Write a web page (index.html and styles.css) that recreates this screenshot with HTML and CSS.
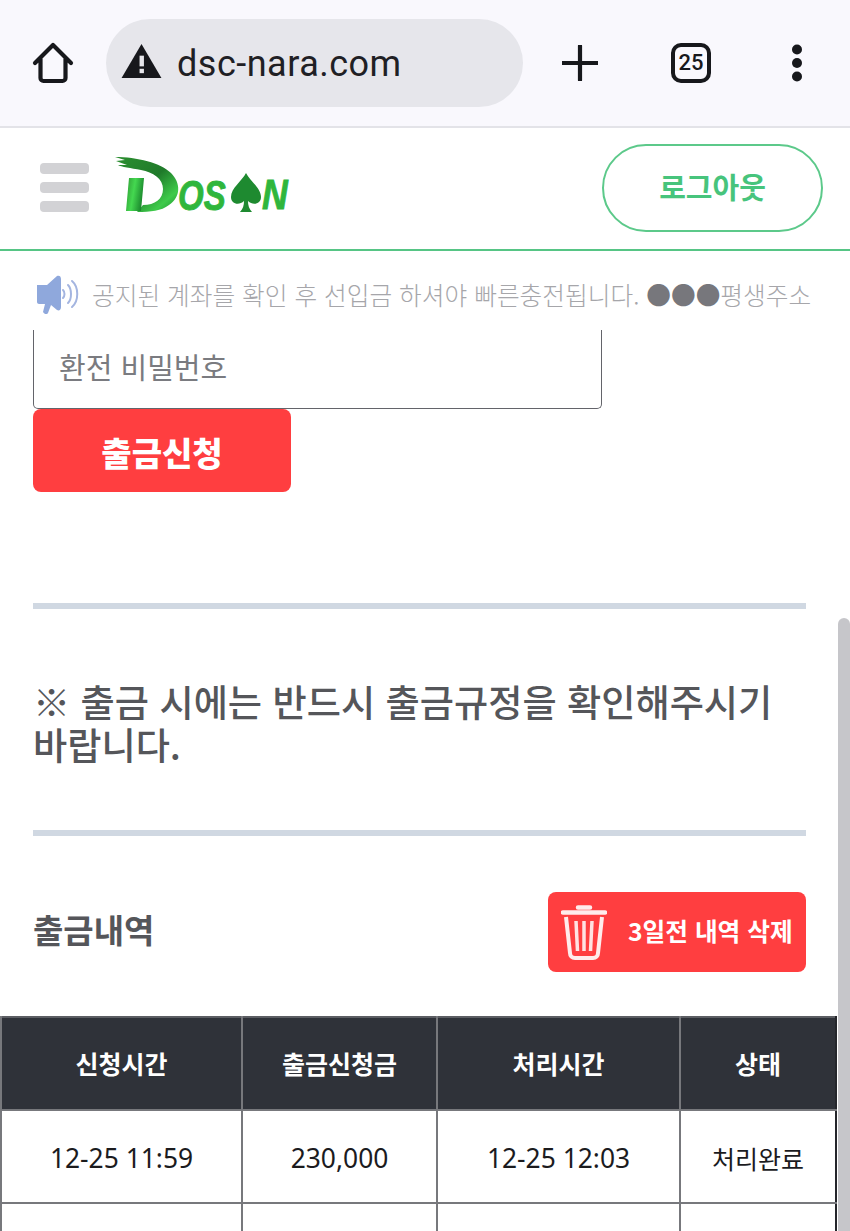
FILE: index.html
```html
<!DOCTYPE html>
<html lang="ko">
<head>
<meta charset="utf-8">
<title>dsc-nara.com</title>
<link rel="stylesheet" href="styles.css">
</head>
<body>
<div class="screen">
  <div class="chrome">
    <svg class="home-icon" viewBox="0 0 42 42" width="42" height="42"><path d="M3 21 21 3l18 18M8.500 17v19a3 3 0 0 0 3 3h19a3 3 0 0 0 3-3V17" fill="none" stroke="#17181c" stroke-width="4.200" stroke-linecap="round" stroke-linejoin="round"/></svg>
    <div class="omnibox">
      <svg class="warn-icon" viewBox="0 0 42 36" width="41" height="35"><path d="M21 0 41.500 35H.5Z" fill="#17181c"/><rect x="19" y="12" width="4.500" height="11" fill="#e6e6eb"/><rect x="19" y="25.500" width="4.500" height="4.500" fill="#e6e6eb"/></svg>
      <span class="url">dsc-nara.com</span>
    </div>
    <svg class="plus-icon" viewBox="0 0 36 36" width="36" height="36"><path d="M18 1v34M1 18h34" stroke="#17181c" stroke-width="4.200" stroke-linecap="round"/></svg>
    <div class="tabs">25</div>
    <svg class="dots-icon" viewBox="0 0 12 38" width="12" height="38"><circle cx="6" cy="5.500" r="5"/><circle cx="6" cy="19" r="5"/><circle cx="6" cy="32.500" r="5"/></svg>
  </div>

  <header class="site-header">
    <div class="burger"><span></span><span></span><span></span></div>
    <svg class="logo" viewBox="0 0 180 70" width="180" height="70" role="img" aria-label="Dosan">
      <defs>
        <linearGradient id="lg" x1="0" y1="0" x2="1" y2="0.300">
          <stop offset="0" stop-color="#2f9a34"/><stop offset=".5" stop-color="#44d850"/><stop offset="1" stop-color="#1c8a2e"/>
        </linearGradient>
        <linearGradient id="dg" x1="0" y1="0" x2="1" y2="1">
          <stop offset="0" stop-color="#2c8f30"/><stop offset=".5" stop-color="#1f7a2a"/><stop offset=".8" stop-color="#3ecb4a"/><stop offset="1" stop-color="#1c8a2e"/>
        </linearGradient>
      </defs>
      <path d="M2 4C24 4 48 10 58 20c10 10 10 24-2 32-8 6-18 7-32 7l6-7c12 0 20-6 20-16 0-10-10-17-22-19C18 15 8 14 5 12h9L3 8l9-1Z" fill="url(#dg)"/>
      <path d="M16 25h15l-3 33H13Z" fill="url(#lg)"/>
      <text class="logo-text" transform="translate(65 57) scale(1 1.3)" fill="#2fb63c" stroke="#2fb63c" stroke-width=".7">OS</text>
      <path d="M133 20c4 8 15 15 15 24 0 7-8 9-13 4 0 4 1 8 4 11h-12c3-3 4-7 4-11-5 5-13 3-13-4 0-9 11-16 15-24Z" fill="#1e8a30"/>
      <text class="logo-text" transform="translate(149 56) scale(1.08 1.3)" fill="#2fb63c" stroke="#2fb63c" stroke-width=".7">N</text>
    </svg>
    <a class="logout">로그아웃</a>
  </header>

  <div class="notice">
    <svg class="speaker" viewBox="0 0 44 40" width="44" height="40"><path d="M1 10h10l10-9c2-1 4 0 4 3v28c0 3-2 4-4 3l-6-5-3 8c-1 2-4 1-5-1l2-8H3c-1 0-2-1-2-2Z" fill="#8fa8dc"/><path d="M27 15c2 2 2 6 0 8M32 10c4 4 4 14 0 18M36 6c7 6 7 20 0 26" fill="none" stroke="#a4b5e0" stroke-width="2" stroke-linecap="round"/></svg>
    <span class="notice-text">공지된 계좌를 확인 후 선입금 하셔야 빠른충전됩니다. <span class="notice-dots">●●●</span>평생주소</span>
  </div>

  <main class="content">
    <div class="panel">
      <div class="field">환전 비밀번호</div>
      <button class="btn-apply">출금신청</button>
      <hr class="rule rule-first">
      <p class="warning">※ 출금 시에는 반드시 출금규정을 확인해주시기 바랍니다.</p>
      <hr class="rule rule-second">
      <div class="history-head">
        <h2 class="history-title">출금내역</h2>
        <button class="btn-delete">
          <svg class="trash" viewBox="0 0 46 56" width="46" height="56"><path d="M17 3.500h12M2 8.500h42" stroke="#fff" stroke-width="4.500" stroke-linecap="round" fill="none" opacity=".9"/><path d="M5 13l4 36c0 3 2 5 5 5h18c3 0 5-2 5-5l4-36" stroke="#fff" stroke-width="4" fill="none" opacity=".9"/><path d="M15 17l1.500 30M23 17v30M31 17l-1.500 30" stroke="#fff" stroke-width="3.500" fill="none" opacity=".85"/></svg>
          <span>3일전 내역 삭제</span>
        </button>
      </div>
    </div>
    <table class="history">
      <colgroup><col class="c1"><col class="c2"><col class="c3"><col class="c4"></colgroup>
      <thead><tr><th>신청시간</th><th>출금신청금</th><th>처리시간</th><th>상태</th></tr></thead>
      <tbody>
        <tr><td>12-25 11:59</td><td>230,000</td><td>12-25 12:03</td><td class="status">처리완료</td></tr>
        <tr><td>&nbsp;</td><td></td><td></td><td></td></tr>
      </tbody>
    </table>
    <div class="scroll-thumb"></div>
  </main>
</div>
</body>
</html>
```
FILE: styles.css
```css
* { box-sizing: border-box; }
html, body { margin: 0; padding: 0; background: #fff; }
body { font-family: "Noto Sans", "Noto Sans CJK KR", sans-serif; overflow: hidden; }
.screen { width: 850px; height: 1231px; display: flex; flex-direction: column; overflow: hidden; }

.chrome { height: 128px; flex: none; display: flex; align-items: center; background: #f9f8fd; border-bottom: 2px solid #e3e3e8; padding: 0 0 0 32px; }
.home-icon { flex: none; }
.omnibox { width: 417px; height: 88px; margin-left: 32px; border-radius: 44px; background: #e6e6eb; display: flex; align-items: center; padding-left: 15px; flex: none; }
.warn-icon { flex: none; margin-top: -4px; }
.url { margin-left: 15px; font: 36px/1 Roboto, sans-serif; color: #1f2024; letter-spacing: .5px; margin-top: 2px; }
.plus-icon { margin-left: 39px; flex: none; }
.tabs { margin-left: 73px; width: 40px; height: 40px; flex: none; border: 4px solid #17181c; border-radius: 10px; display: flex; align-items: center; justify-content: center; font: 500 22px/1 Roboto, sans-serif; color: #17181c; }
.dots-icon { margin-left: 80px; flex: none; fill: #17181c; }

.site-header { height: 123px; flex: none; display: flex; align-items: center; background: #fff; border-bottom: 2px solid #56c585; padding: 0 27px 0 40px; }
.burger { width: 49px; display: flex; flex-direction: column; gap: 8px; margin-bottom: 3px; }
.burger span { height: 11px; border-radius: 4px; background: #d2d2d5; }
.logo { margin-left: 24px; margin-bottom: 1px; flex: none; }
.logo-text { font: italic 700 33px "Liberation Sans", sans-serif; }
.logout { margin-left: auto; width: 221px; height: 88px; border: 2px solid #5cc98a; border-radius: 44px; display: flex; align-items: center; justify-content: center; padding-bottom: 4px; font: 700 29px/1 "Noto Sans CJK KR", sans-serif; color: #47c47c; margin-top: -1px; }

.notice { height: 79px; flex: none; display: flex; align-items: center; background: #fff; padding: 8px 0 0 36px; gap: 13px; white-space: nowrap; }
.speaker { flex: none; }
.notice-text { font: 300 24.7px/1 "Noto Sans CJK KR", sans-serif; color: #a6a6aa; margin-left: -1px; }
.notice-dots { color: #77777c; }

.content { position: relative; flex: 1; overflow: hidden; background: #fff; }
.panel { padding: 0 44px 0 33px; }
.field { margin-top: -2px; width: 569px; height: 81px; border: 1px solid #63646a; border-top: none; border-radius: 0 0 5px 5px; padding: 0 25px 4px; display: flex; align-items: center; font: 400 29px/1 "Noto Sans CJK KR", sans-serif; color: #7a7b80; }
.btn-apply { display: block; width: 258px; height: 83px; border: none; border-radius: 8px; background: #ff3e40; color: #fff; font: 900 33px/1 "Noto Sans CJK KR", sans-serif; padding: 3px 0 0; }
.rule { border: none; height: 6px; background: #d0d8e2; margin: 0; }
.rule-first { margin-top: 111px; }
.warning { margin: 71px 0 0; font: 500 37.2px/43px "Noto Sans CJK KR", sans-serif; color: #55565a; word-break: keep-all; padding-right: 20px; }
.rule-second { margin-top: 64px; }
.history-head { margin-top: 56px; height: 80px; display: flex; align-items: center; justify-content: space-between; }
.history-title { margin: 0 0 5px; font: 700 33px/1 "Noto Sans CJK KR", sans-serif; color: #55565a; }
.btn-delete { width: 258px; height: 80px; border: none; border-radius: 8px; background: #ff3e40; color: #fff; display: flex; align-items: center; padding: 0 0 0 13px; font: 700 24.7px/1 "Noto Sans CJK KR", sans-serif; }
.btn-delete span { margin-left: 21px; margin-bottom: 4px; white-space: nowrap; }
.trash { flex: none; }

.history { margin-top: 44px; width: 837px; border-collapse: collapse; table-layout: fixed; border-right: 2px solid #24262b; border-top: 2px solid #5c5e63; }
.c1 { width: 241px; } .c2 { width: 195px; } .c3 { width: 243px; } .c4 { width: 156px; }
.history th, .history td { height: 93px; text-align: center; border: 2px solid #77787c; padding: 0; border-top-width: 0; }
.history th:last-child, .history td:last-child { border-right-color: #24262b; }
.history th { background: #2f3239; color: #fff; font: 700 25px/1 "Noto Sans CJK KR", sans-serif; }
.history td { color: #1b1b1e; font: 400 26.4px/1 "Noto Sans", "Noto Sans CJK KR", sans-serif; padding-top: 3px; }
.history td.status { font-size: 25px; font-family: "Noto Sans CJK KR", sans-serif; }
.scroll-thumb { position: absolute; right: 0; top: 288px; bottom: 0; width: 12px; background: #c6c6ca; border-radius: 6px 6px 0 0; }
```
